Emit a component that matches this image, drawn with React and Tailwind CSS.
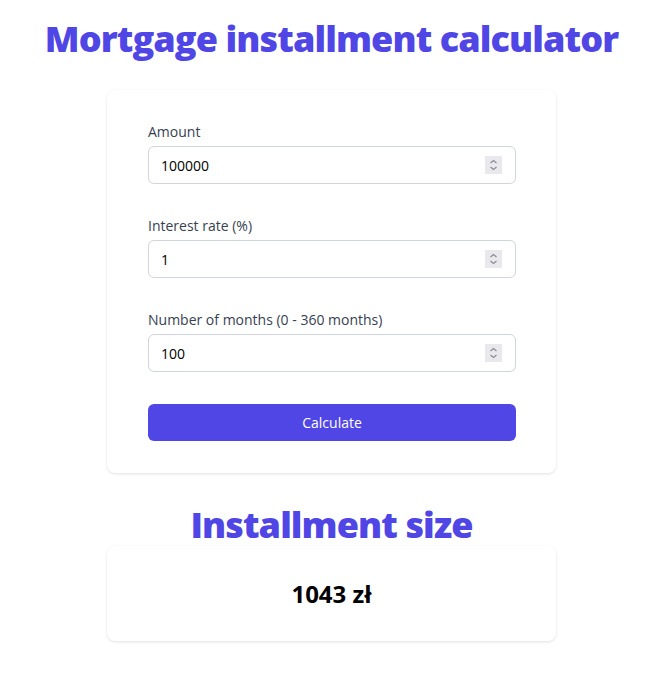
import React, { useState } from 'react';

const fields = [
  { id: 'amount', label: 'Amount', value: '100000' },
  { id: 'rate', label: 'Interest rate (%)', value: '1' },
  { id: 'months', label: 'Number of months (0 - 360 months)', value: '100' },
];

function Spinner() {
  return (
    <span className="absolute right-[14px] top-1/2 -translate-y-1/2 w-[17px] h-[18px] bg-[#e9e9ed] flex items-center justify-center pointer-events-none">
      <svg width="9" height="12" viewBox="0 0 9 12" fill="none" stroke="#8b8b94" strokeWidth="1.2">
        <path d="M1.5 4 L4.5 1.5 L7.5 4" />
        <path d="M1.5 8 L4.5 10.5 L7.5 8" />
      </svg>
    </span>
  );
}

export default function App() {
  const [values, setValues] = useState(
    Object.fromEntries(fields.map(f => [f.id, f.value]))
  );

  return (
    <div className="min-h-screen bg-white font-['Open_Sans',sans-serif] flex flex-col items-center pl-[10px]">
      <h1 className="mt-[19px] text-4xl leading-10 font-extrabold tracking-tight text-[#4f46e5]">
        Mortgage installment calculator
      </h1>

      <div className="mt-[31px] w-[449px] bg-white rounded-lg shadow-[0_1px_3px_rgba(0,0,0,0.12)] pl-[41px] pr-[40px] pt-[32px] pb-[32px]">
        {fields.map(f => (
          <div key={f.id} className="mb-[32px]">
            <label className="block text-sm text-[#374151] leading-5 mb-[4px]">{f.label}</label>
            <div className="relative">
              <input
                type="number"
                value={values[f.id]}
                onChange={e => setValues({ ...values, [f.id]: e.target.value })}
                className="block w-full h-[38px] px-3 rounded-md border border-gray-300 text-sm text-black [appearance:textfield] [&::-webkit-inner-spin-button]:appearance-none [&::-webkit-outer-spin-button]:appearance-none"
              />
              <Spinner />
            </div>
          </div>
        ))}
        <button className="w-full h-[37px] rounded-md bg-[#4f46e5] text-white text-sm">
          Calculate
        </button>
      </div>

      <h2 className="mt-[32px] mb-[1px] text-4xl leading-10 font-extrabold tracking-tight text-[#4f46e5]">
        Installment size
      </h2>
      <div className="w-[449px] h-[95px] bg-white rounded-lg shadow-[0_1px_3px_rgba(0,0,0,0.12)] flex items-center justify-center">
        <span className="text-2xl font-bold text-black">1043 zł</span>
      </div>
    </div>
  );
}
